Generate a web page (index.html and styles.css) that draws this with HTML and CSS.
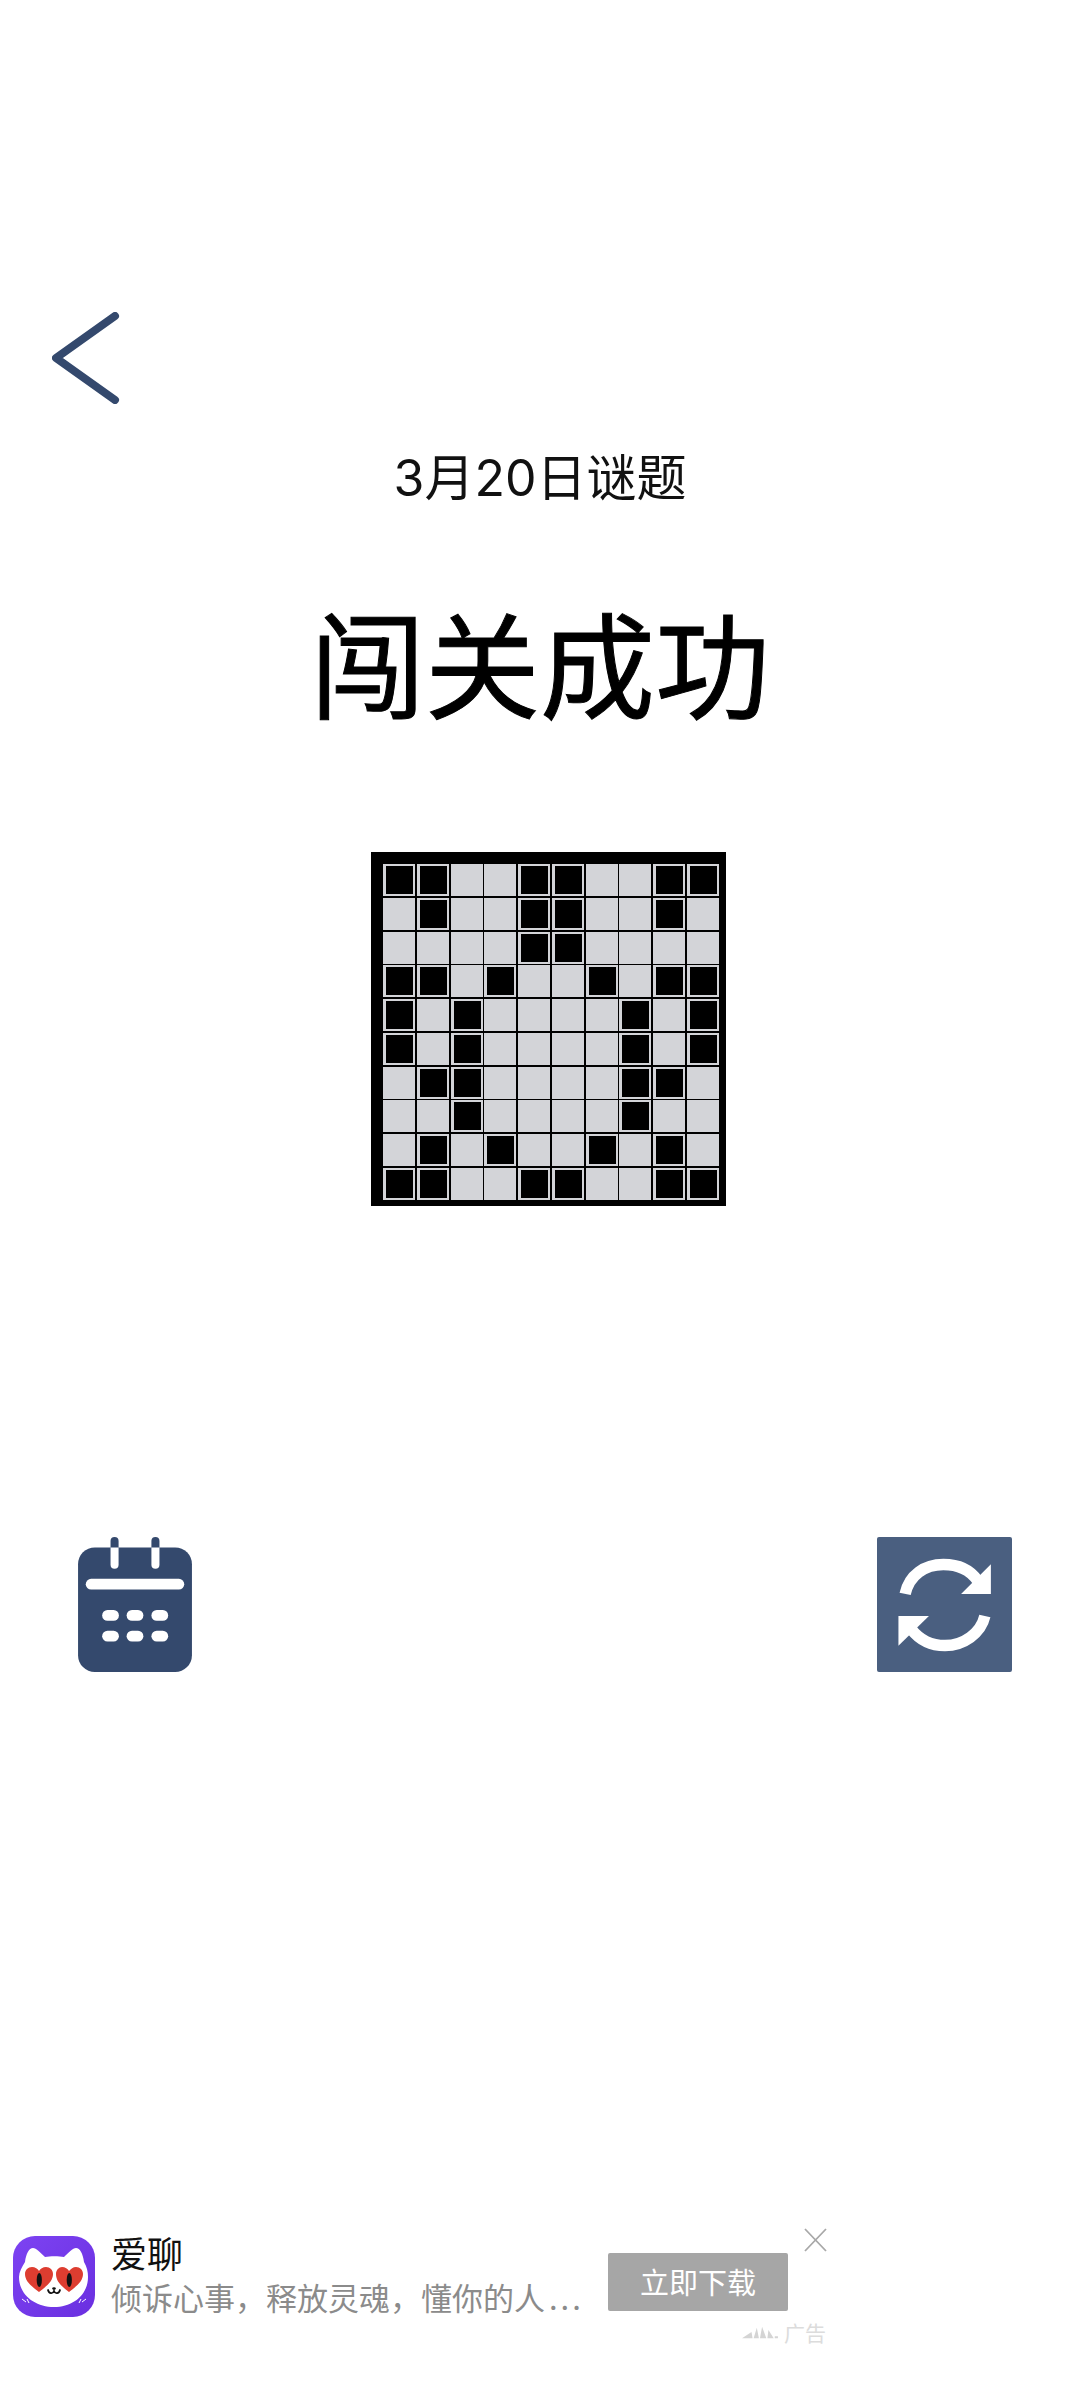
FILE: index.html
```html
<!DOCTYPE html>
<html lang="zh-CN">
<head>
  <meta charset="UTF-8">
  <meta name="viewport" content="width=device-width, initial-scale=1.0">
  <title>闯关成功</title>
  <link rel="stylesheet" href="styles.css">
</head>
<body>

  <div class="page">
    <!-- Back arrow -->
    <svg class="back" viewBox="0 0 68 92" xmlns="http://www.w3.org/2000/svg">
      <polyline points="63,4 4,46 63,88" fill="none" stroke="#34496d" stroke-width="8" stroke-linecap="round" stroke-linejoin="round"/>
    </svg>

    <div class="date-title">3月20日谜题</div>
    <div class="result-title">闯关成功</div>

    <!-- Puzzle board -->
    <div class="board">
      <div class="cell on"></div><div class="cell on"></div><div class="cell"></div><div class="cell"></div><div class="cell on"></div><div class="cell on"></div><div class="cell"></div><div class="cell"></div><div class="cell on"></div><div class="cell on"></div>
      <div class="cell"></div><div class="cell on"></div><div class="cell"></div><div class="cell"></div><div class="cell on"></div><div class="cell on"></div><div class="cell"></div><div class="cell"></div><div class="cell on"></div><div class="cell"></div>
      <div class="cell"></div><div class="cell"></div><div class="cell"></div><div class="cell"></div><div class="cell on"></div><div class="cell on"></div><div class="cell"></div><div class="cell"></div><div class="cell"></div><div class="cell"></div>
      <div class="cell on"></div><div class="cell on"></div><div class="cell"></div><div class="cell on"></div><div class="cell"></div><div class="cell"></div><div class="cell on"></div><div class="cell"></div><div class="cell on"></div><div class="cell on"></div>
      <div class="cell on"></div><div class="cell"></div><div class="cell on"></div><div class="cell"></div><div class="cell"></div><div class="cell"></div><div class="cell"></div><div class="cell on"></div><div class="cell"></div><div class="cell on"></div>
      <div class="cell on"></div><div class="cell"></div><div class="cell on"></div><div class="cell"></div><div class="cell"></div><div class="cell"></div><div class="cell"></div><div class="cell on"></div><div class="cell"></div><div class="cell on"></div>
      <div class="cell"></div><div class="cell on"></div><div class="cell on"></div><div class="cell"></div><div class="cell"></div><div class="cell"></div><div class="cell"></div><div class="cell on"></div><div class="cell on"></div><div class="cell"></div>
      <div class="cell"></div><div class="cell"></div><div class="cell on"></div><div class="cell"></div><div class="cell"></div><div class="cell"></div><div class="cell"></div><div class="cell on"></div><div class="cell"></div><div class="cell"></div>
      <div class="cell"></div><div class="cell on"></div><div class="cell"></div><div class="cell on"></div><div class="cell"></div><div class="cell"></div><div class="cell on"></div><div class="cell"></div><div class="cell on"></div><div class="cell"></div>
      <div class="cell on"></div><div class="cell on"></div><div class="cell"></div><div class="cell"></div><div class="cell on"></div><div class="cell on"></div><div class="cell"></div><div class="cell"></div><div class="cell on"></div><div class="cell on"></div>
    </div>

    <div class="actions">
      <!-- Calendar -->
      <svg class="calendar" viewBox="55 52 340 403" xmlns="http://www.w3.org/2000/svg">
        <rect x="55" y="83" width="340" height="372" rx="50" fill="#34496d"/>
        <rect x="152" y="52" width="24" height="40" rx="12" fill="#34496d"/>
        <rect x="274" y="52" width="24" height="40" rx="12" fill="#34496d"/>
        <path d="M152 83h24v52a12 12 0 0 1-24 0z" fill="#fff"/>
        <path d="M274 83h24v52a12 12 0 0 1-24 0z" fill="#fff"/>
        <rect x="78" y="177" width="294" height="32" rx="16" fill="#fff"/>
        <rect x="127" y="270" width="50" height="32" rx="16" fill="#fff"/>
        <rect x="200" y="270" width="50" height="32" rx="16" fill="#fff"/>
        <rect x="274" y="270" width="50" height="32" rx="16" fill="#fff"/>
        <rect x="127" y="332" width="50" height="32" rx="16" fill="#fff"/>
        <rect x="200" y="332" width="50" height="32" rx="16" fill="#fff"/>
        <rect x="274" y="332" width="50" height="32" rx="16" fill="#fff"/>
      </svg>

      <!-- Refresh -->
      <svg class="refresh" viewBox="52 52 403 403" xmlns="http://www.w3.org/2000/svg">
        <rect x="52" y="52" width="403" height="403" rx="6" fill="#4a5f80"/>
        <path d="M136 222C148 165 195 134 250 134C295 134 330 150 352 182" fill="none" stroke="#fff" stroke-width="34"/>
        <polygon points="392,133 392,222 303,222" fill="#fff"/>
        <path d="M374 288C362 340 310 376 255 376C215 376 180 360 155 328" fill="none" stroke="#fff" stroke-width="34"/>
        <polygon points="116,377 116,288 207,288" fill="#fff"/>
      </svg>
    </div>

    <!-- Ad banner -->
    <div class="ad">
      <svg class="ad-icon" viewBox="0 0 82 81" xmlns="http://www.w3.org/2000/svg">
        <defs>
          <linearGradient id="adBg" x1="0" y1="0" x2="1" y2="1">
            <stop offset="0" stop-color="#7d43f2"/>
            <stop offset="1" stop-color="#6a2fe0"/>
          </linearGradient>
        </defs>
        <rect width="82" height="81" rx="22" fill="url(#adBg)"/>
        <path d="M12 26C13 18 16 12 20 12C23 12 28 17 32 21C37 20 46 20 51 21C55 17 60 12 63 12C67 12 70 18 71 26C74 31 75 36 75 41C75 59 60 71 41 71C22 71 6 59 6 41C6 36 9 31 12 26Z" fill="#fff"/>
        <path d="M26 56C18 50 12 45 12 38C12 34 15 31 19 31C22 31 25 33 26 35C27 33 30 31 33 31C37 31 40 34 40 38C40 45 34 50 26 56Z" fill="#dd3d30"/>
        <path d="M56 56C48 50 43 45 43 38C43 34 46 31 49 31C52 31 55 33 56 35C58 33 60 31 63 31C67 31 70 34 70 38C70 45 64 50 56 56Z" fill="#dd3d30"/>
        <ellipse cx="26.3" cy="44" rx="2.6" ry="7" fill="#111"/>
        <ellipse cx="56.3" cy="44" rx="2.6" ry="7" fill="#111"/>
        <path d="M35 54C36 58 40 58 41 55C42 58 46 58 47 54" fill="none" stroke="#111" stroke-width="1.8" stroke-linecap="round"/>
        <ellipse cx="41" cy="52.5" rx="1.8" ry="1.2" fill="#111"/>
        <path d="M9 63L13 66M14 63L16 67M73 63L69 66M68 63L66 67" stroke="#fff" stroke-width="1"/>
      </svg>

      <div class="ad-text">
        <div class="ad-name">爱聊</div>
        <div class="ad-desc">倾诉心事，释放灵魂，懂你的人<span class="ad-more">...</span></div>
      </div>

      <div class="ad-side">
        <svg class="ad-close" viewBox="0 0 25 24" xmlns="http://www.w3.org/2000/svg">
          <path d="M2 1L23 23M23 1L2 23" stroke="#a8a8a8" stroke-width="1.8" fill="none"/>
        </svg>
        <div class="ad-button">立即下载</div>
        <div class="ad-tag">
          <svg class="ad-mark" viewBox="0 0 35 14" xmlns="http://www.w3.org/2000/svg">
            <path d="M0 13L9 7L10 13ZM11 13L14 3L16 13ZM17 13L19 2L23 13ZM24 13L25 5L30 13ZM31 13h3v-2h-3z" fill="#d4d4d4"/>
          </svg>
          <span>广告</span>
        </div>
      </div>
    </div>
  </div>

</body>
</html>
```

FILE: styles.css
```css
body {
  margin: 0;
  background-color: #fff;
  font-family: "Noto Sans CJK SC", "Noto Sans", sans-serif;
}
.page {
  height: 2400px;
  display: flex;
  flex-direction: column;
  overflow: hidden;
}
.back {
  display: block;
  width: 68px;
  height: 92px;
  margin: 312px 0 0 52px;
}
.date-title {
  margin-top: 44px;
  font-family: Inter, "Noto Sans CJK SC", sans-serif;
  font-size: 50px;
  line-height: 60px;
  text-align: center;
  color: #111;
}
.result-title {
  margin-top: 87px;
  font-size: 115px;
  -webkit-text-stroke: 1px #000;
  line-height: 130px;
  text-align: center;
  color: #000;
}
.board {
  box-sizing: border-box;
  width: 355px;
  height: 354px;
  margin: 127px 0 0 371px;
  padding: 12px 7px 6px 12px;
  background-color: #000;
  display: grid;
  grid-template-columns: repeat(10, 1fr);
  grid-template-rows: repeat(10, 1fr);
  gap: 1.7px;
}
.cell {
  background-color: #d3d4d8;
}
.cell.on {
  background-color: #000;
  border: 2px solid #d3d4d8;
  border-width: 2px 2px 2px 3px;
}
.actions {
  display: flex;
  justify-content: space-between;
  align-items: flex-end;
  margin-top: 331px;
  padding: 0 68px 0 78px;
}
.calendar {
  width: 114px;
  height: 135px;
}
.refresh {
  width: 135px;
  height: 135px;
}
.ad {
  display: flex;
  align-items: flex-start;
  margin-top: 556px;
  padding-left: 13px;
}
.ad-icon {
  flex: none;
  width: 82px;
  height: 81px;
  margin-top: 8px;
}
.ad-text {
  width: 497px;
  margin-left: 16px;
  white-space: nowrap;
}
.ad-name {
  font-size: 36px;
  line-height: 48px;
  color: #111;
}
.ad-desc {
  font-size: 31px;
  line-height: 42px;
  color: #8b8b8b;
}
.ad-more {
  margin-left: 4px;
  letter-spacing: 3px;
}
.ad-side {
  width: 221px;
  margin-left: -1px;
  display: flex;
  flex-direction: column;
}
.ad-close {
  align-self: flex-end;
  width: 25px;
  height: 24px;
}
.ad-button {
  width: 180px;
  height: 58px;
  margin: 1px 0 0 1px;
  border-radius: 2px;
  background-color: #a6a6a6;
  color: #fff;
  font-size: 29px;
  line-height: 56px;
  text-align: center;
}
.ad-tag {
  align-self: flex-end;
  display: flex;
  align-items: center;
  gap: 5px;
  margin-top: 7px;
  margin-right: 2px;
  font-size: 21px;
  line-height: 28px;
  color: #dcdcdc;
}
.ad-mark {
  width: 37px;
  height: 16px;
}
```
